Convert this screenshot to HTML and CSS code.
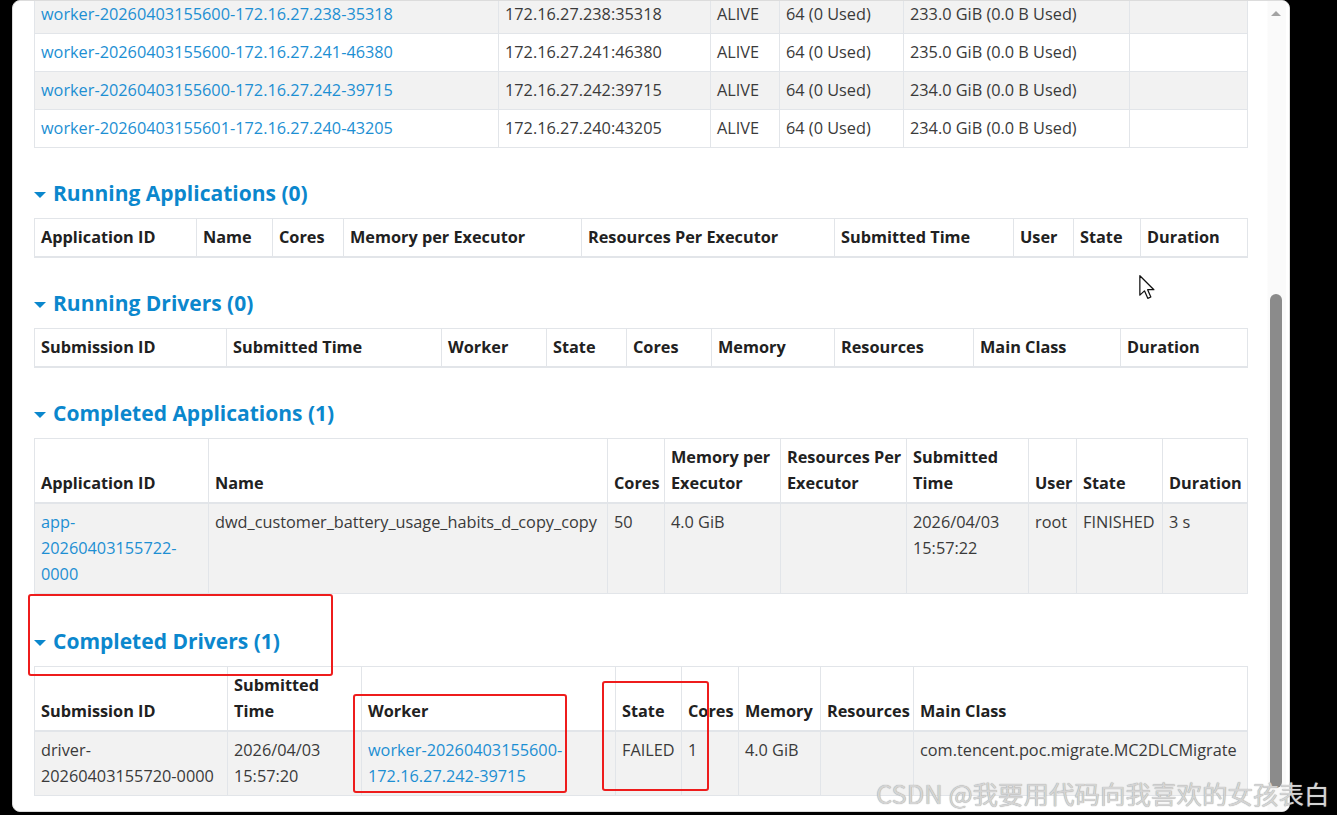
FILE: index.html
```html
<!DOCTYPE html>
<html lang="en">
<head>
    <meta charset="UTF-8">
    <title>Spark Master</title>
    <link rel="stylesheet" href="styles.css">
</head>
<body>
    <div class="window">
        <div class="page">
            <table class="table table-striped workers">
                <colgroup><col><col><col><col><col><col></colgroup>
                <tbody>
                    <tr><td><a href="#">worker-20260403155600-172.16.27.238-35318</a></td><td>172.16.27.238:35318</td><td>ALIVE</td><td>64 (0 Used)</td><td>233.0 GiB (0.0 B Used)</td><td></td></tr>
                    <tr><td><a href="#">worker-20260403155600-172.16.27.241-46380</a></td><td>172.16.27.241:46380</td><td>ALIVE</td><td>64 (0 Used)</td><td>235.0 GiB (0.0 B Used)</td><td></td></tr>
                    <tr><td><a href="#">worker-20260403155600-172.16.27.242-39715</a></td><td>172.16.27.242:39715</td><td>ALIVE</td><td>64 (0 Used)</td><td>234.0 GiB (0.0 B Used)</td><td></td></tr>
                    <tr><td><a href="#">worker-20260403155601-172.16.27.240-43205</a></td><td>172.16.27.240:43205</td><td>ALIVE</td><td>64 (0 Used)</td><td>234.0 GiB (0.0 B Used)</td><td></td></tr>
                </tbody>
            </table>

            <h4 class="section-title"><span class="arrow"></span>Running Applications (0)</h4>
            <table class="table table-striped running-apps">
                <colgroup><col><col><col><col><col><col><col><col><col></colgroup>
                <thead>
                    <tr><th>Application ID</th><th>Name</th><th>Cores</th><th>Memory per Executor</th><th>Resources Per Executor</th><th>Submitted Time</th><th>User</th><th>State</th><th>Duration</th></tr>
                </thead>
                <tbody></tbody>
            </table>

            <h4 class="section-title"><span class="arrow"></span>Running Drivers (0)</h4>
            <table class="table table-striped running-drivers">
                <colgroup><col><col><col><col><col><col><col><col><col></colgroup>
                <thead>
                    <tr><th>Submission ID</th><th>Submitted Time</th><th>Worker</th><th>State</th><th>Cores</th><th>Memory</th><th>Resources</th><th>Main Class</th><th>Duration</th></tr>
                </thead>
                <tbody></tbody>
            </table>

            <h4 class="section-title"><span class="arrow"></span>Completed Applications (1)</h4>
            <table class="table table-striped completed-apps">
                <colgroup><col><col><col><col><col><col><col><col><col></colgroup>
                <thead>
                    <tr><th>Application ID</th><th>Name</th><th>Cores</th><th>Memory per Executor</th><th>Resources Per Executor</th><th>Submitted Time</th><th>User</th><th>State</th><th>Duration</th></tr>
                </thead>
                <tbody>
                    <tr><td><a href="#">app-20260403155722-0000</a></td><td>dwd_customer_battery_usage_habits_d_copy_copy</td><td>50</td><td>4.0 GiB</td><td></td><td>2026/04/03 15:57:22</td><td>root</td><td>FINISHED</td><td>3 s</td></tr>
                </tbody>
            </table>

            <h4 class="section-title last"><span class="arrow"></span>Completed Drivers (1)</h4>
            <table class="table table-striped completed-drivers">
                <colgroup><col><col><col><col><col><col><col><col></colgroup>
                <thead>
                    <tr><th>Submission ID</th><th>Submitted Time</th><th>Worker</th><th>State</th><th>Cores</th><th>Memory</th><th>Resources</th><th>Main Class</th></tr>
                </thead>
                <tbody>
                    <tr><td>driver-20260403155720-0000</td><td>2026/04/03 15:57:20</td><td><a href="#">worker-20260403155600-172.16.27.242-39715</a></td><td>FAILED</td><td>1</td><td>4.0 GiB</td><td></td><td>com.tencent.poc.migrate.MC2DLCMigrate</td></tr>
                </tbody>
            </table>
        </div>

        <div class="scrollbar">
            <span class="scroll-up"></span>
            <div class="scroll-thumb"></div>
        </div>

        <!-- annotation boxes drawn over the screenshot -->
        <div class="mark mark-title"></div>
        <div class="mark mark-worker"></div>
        <div class="mark mark-state"></div>

        <svg class="cursor" width="17" height="25" viewBox="0 0 12 18">
            <path d="M0.5 0.5 L0.5 14.5 L3.8 11.4 L6.2 16.8 L8.4 15.8 L6.1 10.6 L10.6 10.6 Z" fill="#fff" stroke="#111" stroke-width="0.9" stroke-linejoin="round"/>
        </svg>
    </div>

    <div class="watermark">CSDN @我要用代码向我喜欢的女孩表白</div>
</body>
</html>
```

FILE: styles.css
```css
body {
    margin: 0;
    background-color: #000;
    font-family: "Open Sans", "Noto Sans", Arial, sans-serif;
    color: #333;
    overflow: hidden;
}
.window {
    position: relative;
    display: flex;
    box-sizing: border-box;
    width: 1278px;
    height: 812px;
    margin-left: 12px;
    background: white;
    border: 1px solid #dcdcdc;
    border-radius: 8px;
    overflow: hidden;
}
.page {
    flex: 1;
    padding: 0 19px 0 21px;
    margin-top: -6px;
}
a {
    color: #1d8fd3;
    text-decoration: none;
}

/* tables */
.table {
    width: 100%;
    border-collapse: collapse;
    table-layout: fixed;
    font-size: 16.3px;
    line-height: 26px;
}
.table th, .table td {
    border: 1px solid #e2e5e9;
    padding: 5px 6px 6px;
    text-align: left;
    vertical-align: top;
}
.table th {
    vertical-align: bottom;
    padding-right: 3px;
    border-bottom: 2px solid #e2e5e9;
    font-weight: bold;
    color: #212121;
}
.table td {
    color: #3a3a3a;
}
.table-striped tbody tr:nth-child(odd) {
    background-color: #f2f2f2;
}

.workers col:nth-child(1) { width: 464px; }
.workers col:nth-child(2) { width: 212px; }
.workers col:nth-child(3) { width: 69px; }
.workers col:nth-child(4) { width: 124px; }
.workers col:nth-child(5) { width: 226px; }
.workers col:nth-child(6) { width: 118px; }

.running-apps col:nth-child(1) { width: 162px; }
.running-apps col:nth-child(2) { width: 76px; }
.running-apps col:nth-child(3) { width: 71px; }
.running-apps col:nth-child(4) { width: 238px; }
.running-apps col:nth-child(5) { width: 253px; }
.running-apps col:nth-child(6) { width: 179px; }
.running-apps col:nth-child(7) { width: 60px; }
.running-apps col:nth-child(8) { width: 67px; }
.running-apps col:nth-child(9) { width: 107px; }

.running-drivers col:nth-child(1) { width: 192px; }
.running-drivers col:nth-child(2) { width: 215px; }
.running-drivers col:nth-child(3) { width: 105px; }
.running-drivers col:nth-child(4) { width: 80px; }
.running-drivers col:nth-child(5) { width: 85px; }
.running-drivers col:nth-child(6) { width: 123px; }
.running-drivers col:nth-child(7) { width: 139px; }
.running-drivers col:nth-child(8) { width: 147px; }
.running-drivers col:nth-child(9) { width: 127px; }

.completed-apps col:nth-child(1) { width: 174px; }
.completed-apps col:nth-child(2) { width: 399px; }
.completed-apps col:nth-child(3) { width: 57px; }
.completed-apps col:nth-child(4) { width: 116px; }
.completed-apps col:nth-child(5) { width: 126px; }
.completed-apps col:nth-child(6) { width: 122px; }
.completed-apps col:nth-child(7) { width: 48px; }
.completed-apps col:nth-child(8) { width: 86px; }
.completed-apps col:nth-child(9) { width: 85px; }

.completed-drivers col:nth-child(1) { width: 193px; }
.completed-drivers col:nth-child(2) { width: 134px; }
.completed-drivers col:nth-child(3) { width: 254px; }
.completed-drivers col:nth-child(4) { width: 66px; }
.completed-drivers col:nth-child(5) { width: 57px; }
.completed-drivers col:nth-child(6) { width: 82px; }
.completed-drivers col:nth-child(7) { width: 93px; }
.completed-drivers col:nth-child(8) { width: 334px; }

/* section headings */
.section-title {
    display: flex;
    align-items: center;
    gap: 7px;
    margin: 30px 0 10px;
    font-size: 21px;
    line-height: 30px;
    font-weight: bold;
    color: #0b87cd;
}
.section-title.last {
    margin-top: 32px;
}
.arrow {
    width: 0;
    height: 0;
    margin-top: 3px;
    border-left: 6px solid transparent;
    border-right: 6px solid transparent;
    border-top: 6px solid #0b87cd;
}

/* scrollbar */
.scrollbar {
    width: 23px;
    display: flex;
    flex-direction: column;
    align-items: center;
    padding-right: 4px;
    box-sizing: border-box;
    background: linear-gradient(to right, #fff 0, #fafafa 1px, #fafafa 19px, #fff 19px);
}
.scroll-up {
    margin-top: 10px;
    width: 0;
    height: 0;
    border-left: 5px solid transparent;
    border-right: 5px solid transparent;
    border-bottom: 5px solid #a3a3a3;
}
.scroll-thumb {
    margin-top: 278px;
    width: 12px;
    height: 494px;
    border-radius: 6px;
    background-color: #8b8b8b;
}

/* annotation marks */
.mark {
    position: absolute;
    border: 2px solid #ee1c1c;
    border-radius: 3px;
}
.mark-title {
    left: 15px;
    top: 593px;
    width: 301px;
    height: 78px;
}
.mark-worker {
    left: 340px;
    top: 693px;
    width: 210px;
    height: 95px;
}
.mark-state {
    left: 589px;
    top: 680px;
    width: 103px;
    height: 106px;
}
.cursor {
    position: absolute;
    left: 1126px;
    top: 274px;
}

.watermark {
    position: absolute;
    left: 876px;
    top: 777px;
    font-family: "Noto Sans CJK SC", "Noto Sans", sans-serif;
    font-size: 25.5px;
    line-height: 32px;
    color: #d4d4d4;
    text-shadow: 0 0 1px #8c8c8c;
    white-space: nowrap;
}
```
